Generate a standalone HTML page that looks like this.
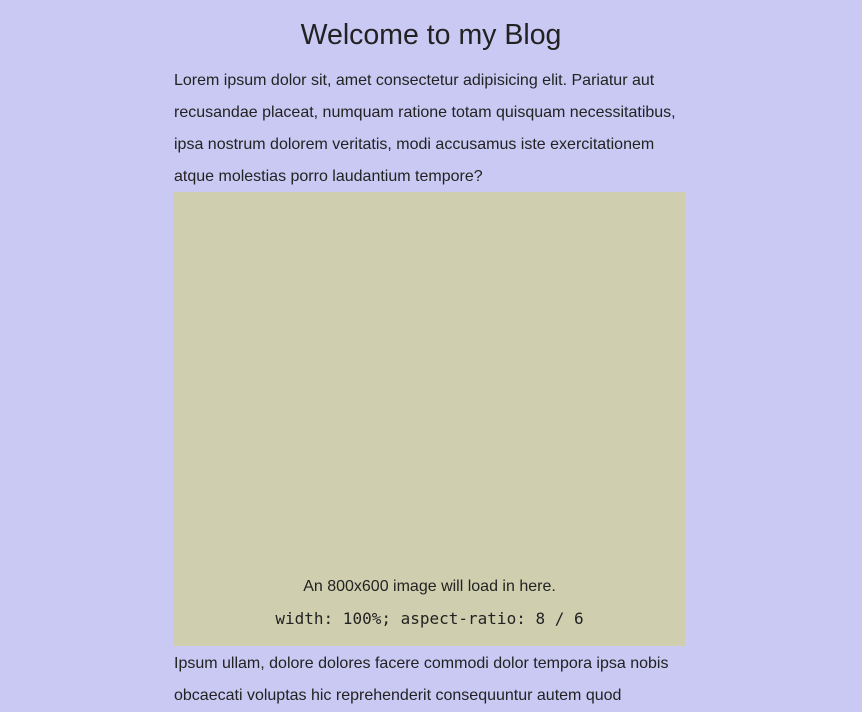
<!DOCTYPE html>
<html><head><style>
html,body{margin:0;padding:0;background:#c9c9f4;}
body{width:862px;height:710px;overflow:hidden;font-family:"Liberation Sans",sans-serif;color:#222;}
h1{position:absolute;left:0;width:862px;top:15px;margin:0;text-align:center;font-weight:normal;font-size:28.5px;line-height:40px;color:#222;}
.col{position:absolute;left:174px;width:511px;}
p{margin:0;font-size:16px;line-height:32px;}
.box{position:absolute;left:174px;top:192px;width:511px;height:454px;background:#cfcfb0;}
.t1{position:absolute;left:0;width:511px;top:381px;text-align:center;font-size:16px;line-height:28px;}
.t2{position:absolute;left:0;width:511px;top:413px;text-align:center;font-family:"DejaVu Sans Mono","Liberation Mono",monospace;font-size:16px;line-height:28px;}
</style></head><body>
<h1>Welcome to my Blog</h1>
<div class="col" style="top:65px"><p>Lorem ipsum dolor sit, amet consectetur adipisicing elit. Pariatur aut recusandae placeat, numquam ratione totam quisquam necessitatibus, ipsa nostrum dolorem veritatis, modi accusamus iste exercitationem atque molestias porro laudantium tempore?</p></div>
<div class="box"><div class="t1">An 800x600 image will load in here.</div><div class="t2">width: 100%; aspect-ratio: 8 / 6</div></div>
<div class="col" style="top:648px"><p>Ipsum ullam, dolore dolores facere commodi dolor tempora ipsa nobis obcaecati voluptas hic reprehenderit consequuntur autem quod</p></div>
</body></html>
